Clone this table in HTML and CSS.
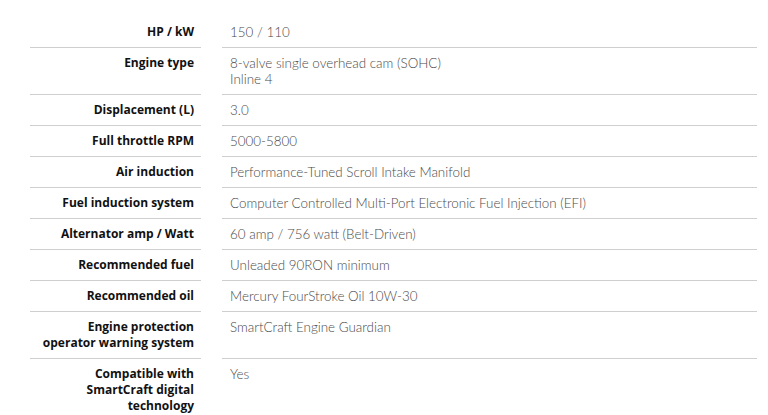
FILE: index.html
```html
<!DOCTYPE html>
<html>
<head>
<meta charset="utf-8">
<link rel="stylesheet" href="styles.css">
</head>
<body>
<div class="specs">
  <div class="label">HP / kW</div><div class="value">150 / 110</div>
  <div class="label">Engine type</div><div class="value">8-valve single overhead cam (SOHC)<br>Inline 4</div>
  <div class="label">Displacement (L)</div><div class="value">3.0</div>
  <div class="label">Full throttle RPM</div><div class="value">5000-5800</div>
  <div class="label">Air induction</div><div class="value">Performance-Tuned Scroll Intake Manifold</div>
  <div class="label">Fuel induction system</div><div class="value">Computer Controlled Multi-Port Electronic Fuel Injection (EFI)</div>
  <div class="label">Alternator amp / Watt</div><div class="value">60 amp / 756 watt (Belt-Driven)</div>
  <div class="label">Recommended fuel</div><div class="value">Unleaded 90RON minimum</div>
  <div class="label">Recommended oil</div><div class="value">Mercury FourStroke Oil 10W-30</div>
  <div class="label">Engine protection operator warning system</div><div class="value">SmartCraft Engine Guardian</div>
  <div class="label last">Compatible with SmartCraft digital technology</div><div class="value last">Yes</div>
</div>
</body>
</html>
```
FILE: styles.css
```css
html, body {
  margin: 0;
  padding: 0;
  background: #ffffff;
}
body {
  font-family: Lato, "Open Sans", sans-serif;
  font-size: 13.4px;
  line-height: 16px;
  overflow: hidden;
}
.specs {
  display: grid;
  grid-template-columns: 171px 535px;
  column-gap: 21px;
  padding: 17px 0 0 30px;
}
.label, .value {
  padding: 7px 0;
  border-bottom: 1px solid #cfcfcf;
}
.label {
  font-family: "Open Sans", Lato, sans-serif;
  font-size: 12px;
  text-align: right;
  font-weight: 700;
  color: #111111;
  padding-right: 7px;
  padding-left: 8px;
}
.value {
  color: #4a4a4a;
  font-weight: 300;
  padding-left: 8px;
}
.last {
  border-bottom: none;
}
```
